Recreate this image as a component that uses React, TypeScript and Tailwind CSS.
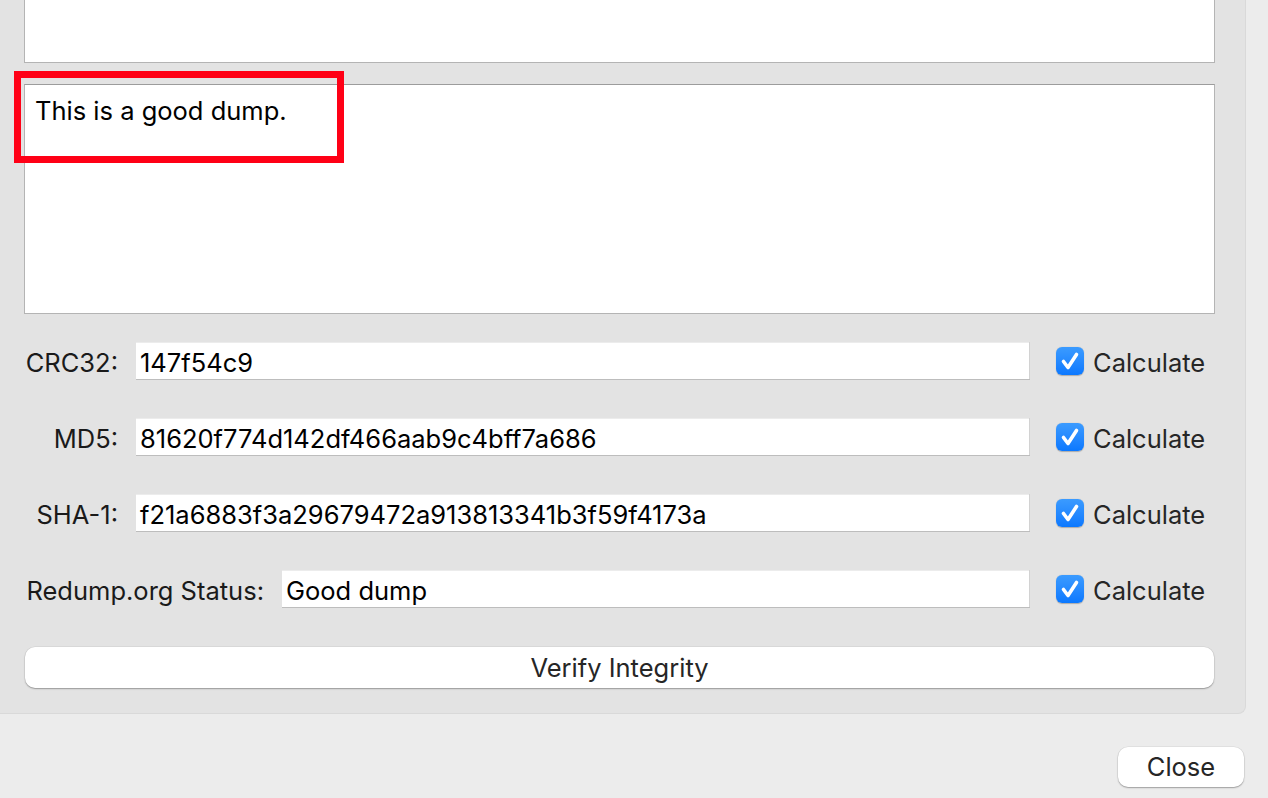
type HashRow = {
  label: string
  value: string
  labelWidth: string
}

const rows: HashRow[] = [
  { label: "CRC32:", value: "147f54c9", labelWidth: "w-[93px]" },
  { label: "MD5:", value: "81620f774d142df466aab9c4bff7a686", labelWidth: "w-[93px]" },
  { label: "SHA-1:", value: "f21a6883f3a29679472a913813341b3f59f4173a", labelWidth: "w-[93px]" },
  { label: "Redump.org Status:", value: "Good dump", labelWidth: "w-[239px]" },
]

function CheckBox() {
  return (
    <span className="flex h-[28px] w-[28px] items-center justify-center rounded-[6px] bg-gradient-to-b from-[#3b9bff] to-[#0a78ff] shadow-[0_0.5px_1px_rgba(0,0,0,0.25)]">
      <svg viewBox="0 0 28 28" className="h-[28px] w-[28px]">
        <path
          d="M7.5 14.5 L12 20.5 L20.5 7.5"
          fill="none"
          stroke="white"
          strokeWidth={3.6}
          strokeLinecap="round"
          strokeLinejoin="round"
        />
      </svg>
    </span>
  )
}

function Row({ row }: { row: HashRow }) {
  return (
    <div className="flex h-[38px] items-center">
      <span className={`${row.labelWidth} shrink-0 whitespace-nowrap pt-[3px] text-right text-[#1a1a1a]`}>
        {row.label}
      </span>
      <div className="ml-[18px] flex h-[38px] flex-1 items-center whitespace-nowrap bg-white pl-[4px] pt-[3px] text-black shadow-[inset_0_-1px_0_#bdbdbd,inset_-1px_0_0_#d2d2d2,inset_0_1px_0_#ececec]">
        {row.value}
      </div>
      <div className="flex w-[185px] shrink-0 items-center pl-[26px]">
        <CheckBox />
        <span className="ml-[9px] pt-[3px] text-[#262626]">Calculate</span>
      </div>
    </div>
  )
}

export default function App() {
  return (
    <div
      className="flex h-[798px] w-[1268px] flex-col overflow-hidden bg-[#ececec] text-[25.5px] leading-none"
      style={{ fontFamily: "Inter, 'Liberation Sans', sans-serif" }}
    >
      {/* group box */}
      <div className="w-[1246px] rounded-br-[8px] border-r border-b border-[#d9d9d9] bg-[#e3e3e3] pb-[25px] pl-[24px] pr-[30px]">
        <div className="h-[63px] border-x border-b border-[#b4b4b4] bg-white" />

        <div className="relative mt-[21px] h-[230px] border border-[#b4b4b4] border-t-[#9c9c9c] bg-white px-[10px] pt-[13px] text-black">
          This is a good dump.
          {/* highlight */}
          <div className="absolute left-[-11px] top-[-14px] h-[92px] w-[330px] border-[7px] border-[#ff0016]" />
        </div>

        <div className="mt-[28px] flex flex-col gap-[38px] pl-[1px]">
          {rows.map((r) => (
            <Row key={r.label} row={r} />
          ))}
        </div>

        <button className="mt-[39px] ml-[1px] flex h-[41px] w-[1189px] items-center justify-center rounded-[10px] bg-white pt-[1px] text-[#262626] shadow-[0_1px_1.5px_rgba(0,0,0,0.3),0_0_0_0.5px_rgba(0,0,0,0.08)]">
          Verify Integrity
        </button>
      </div>

      <div className="mt-[33px] flex justify-end pr-[24px]">
        <button className="flex h-[40px] w-[126px] items-center justify-center rounded-[10px] bg-white text-[#262626] shadow-[0_1px_1.5px_rgba(0,0,0,0.3),0_0_0_0.5px_rgba(0,0,0,0.08)]">
          Close
        </button>
      </div>
    </div>
  )
}
